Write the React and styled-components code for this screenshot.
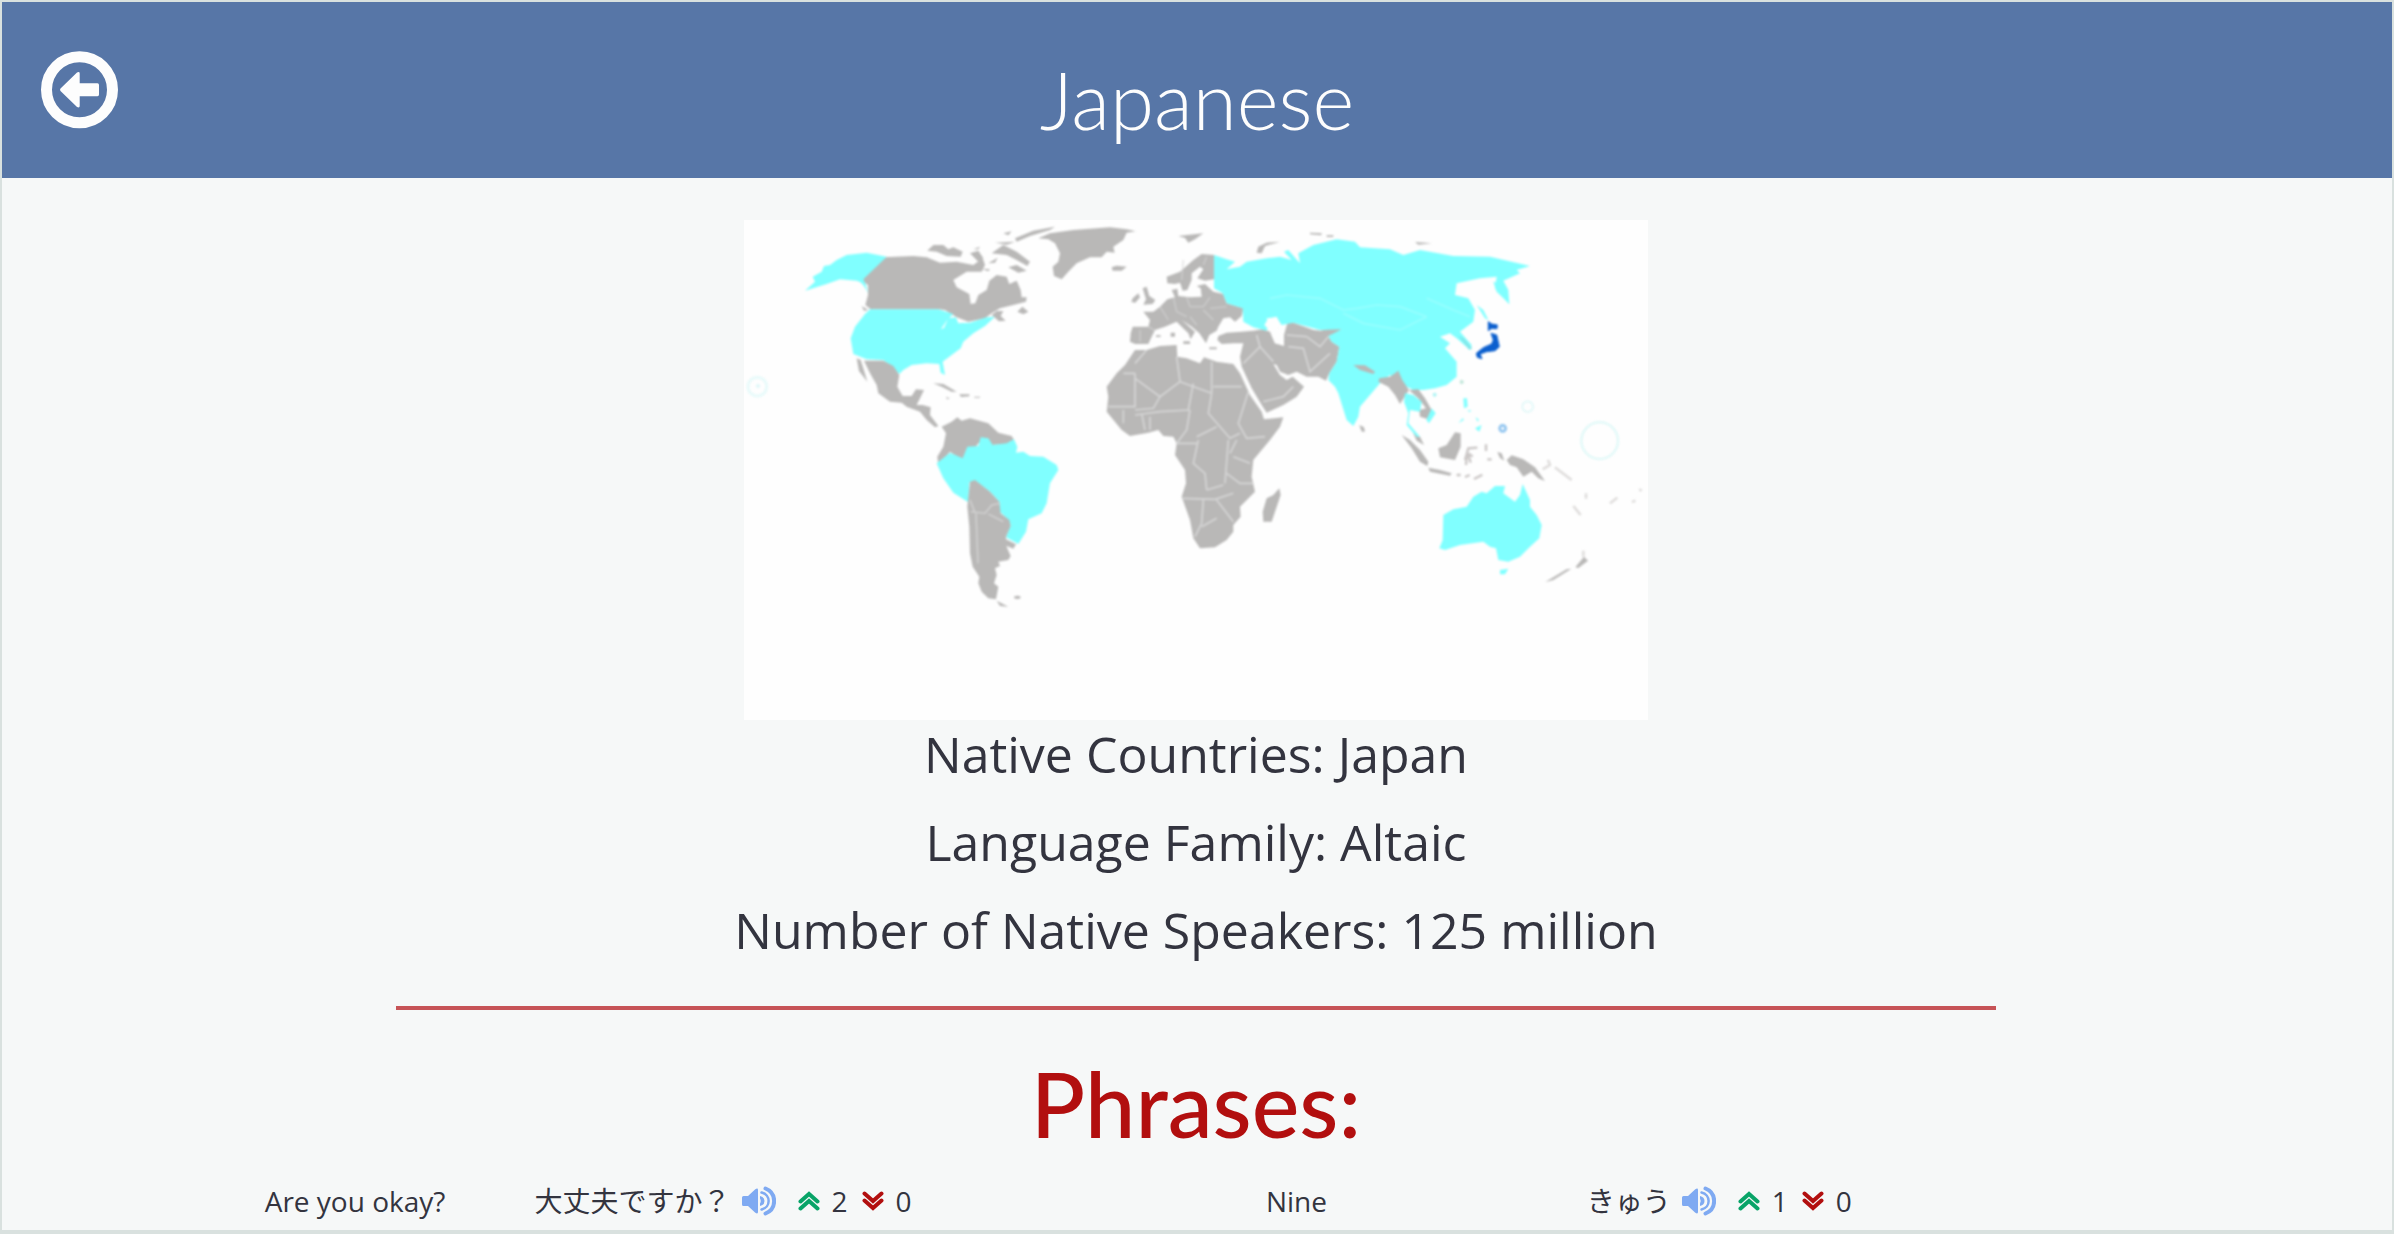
import React from "react";
import styled, { createGlobalStyle } from "styled-components";

const GlobalStyle = createGlobalStyle`
  * { box-sizing: border-box; }
  body { margin: 0; background: #f6f8f8; }
`;

const Page = styled.div`
  height: 100vh;
  overflow: hidden;
  border: solid #d9e1df;
  border-width: 2px 2px 4px;
  background: #f6f8f8;
  color: #33343f;
  font-family: "Open Sans", "Noto Sans CJK JP", sans-serif;
`;

const Header = styled.header`
  display: grid;
  grid-template-columns: 1fr auto 1fr;
  align-items: start;
  height: 176px;
  padding: 49px 39px 0;
  background: #5776a7;
  color: #fdfdfd;
`;

const BackLink = styled.a`
  justify-self: start;
  display: flex;
  color: inherit;
`;

const Title = styled.h1`
  margin: 0;
  font: 300 80px/96px Lato, sans-serif;
`;

const Main = styled.main`
  display: flex;
  flex-direction: column;
  align-items: center;
  padding: 42px 2px 0 0;
`;

const MapFrame = styled.figure`
  margin: 0;
  width: 904px;
  max-width: 100%;
  overflow: hidden;
  background: #fefefe;

  svg {
    display: block;
    width: 100%;
    height: auto;
    filter: blur(1px);
  }
`;

const Facts = styled.div`
  padding-bottom: 28px;
  text-align: center;
`;

const Fact = styled.p`
  margin: 0;
  padding: 0 0 20px;
  font-size: 50px;
  line-height: 68px;
`;

const Divider = styled.hr`
  width: 67%;
  height: 4px;
  margin: -6px 0 0;
  border: 0;
  background: #c65357;
`;

const PhrasesTitle = styled.h2`
  margin: 0;
  padding: 39px 0 24px;
  color: #b20f0f;
  font: 500 90px/108px Lato, sans-serif;
`;

const PhraseGrid = styled.div`
  display: grid;
  grid-template-columns: 270fr 732fr 321fr 541fr;
  align-items: center;
  width: 78%;
  font-size: 28px;
  line-height: 40px;
`;

const Translation = styled.div`
  display: flex;
  align-items: center;
`;

const Native = styled.span`
  margin-right: 11px;
`;

const IconButton = styled.button`
  display: flex;
  padding: 0;
  border: 0;
  background: none;
  color: ${(p) => p.$color};
  cursor: pointer;
`;

const Votes = styled.div`
  display: flex;
  align-items: center;
  gap: 12px;
  margin-left: ${(p) => p.$space}px;
`;

const BackIcon = () => (
  <svg width="78" height="78" viewBox="0 0 78 78" aria-hidden="true">
    <circle cx="38.5" cy="38.7" r="33" fill="none" stroke="currentColor" strokeWidth="11" />
    <path
      d="M19.5 40Q18.5 38.7 19.5 37.4L36 21.5Q38.7 20.3 38.7 22.5V32.2H56.5Q58 32.2 58 34V43.5Q58 45.2 56.5 45.2H38.7V55Q38.7 57.3 36 56Z"
      fill="currentColor"
    />
  </svg>
);

const SpeakerIcon = () => (
  <svg width="34" height="30" viewBox="0 0 34 30" aria-hidden="true">
    <path d="M1.5 10H6L13 3.5Q16 1.5 16 4V26Q16 28.5 13 26.5L6 20H1.5Q0 20 0 18.5V11.5Q0 10 1.5 10Z" fill="currentColor" />
    <path d="M18 10Q22.5 11 22.5 15T18 20V17.5Q19.5 15 18 12.5Z" fill="currentColor" />
    <g fill="none" stroke="currentColor" strokeLinecap="round">
      <path d="M19.5 6.5C29 8.5 29 21.5 19.5 23.5" strokeWidth="2.5" />
      <path d="M23.5 2.5C35 7 35 23 23.5 27.5" strokeWidth="4" />
    </g>
  </svg>
);

const ChevronsIcon = ({ down }) => (
  <svg width="22" height="22" viewBox="0 0 22 22" aria-hidden="true">
    <path
      d={down ? "M2.5 3.5L11 11L19.5 3.5M2.5 10.5L11 18L19.5 10.5" : "M2.5 11.5L11 4L19.5 11.5M2.5 18.5L11 11L19.5 18.5"}
      fill="none"
      stroke="currentColor"
      strokeWidth="4"
      strokeLinecap="round"
    />
  </svg>
);

const LAND = "#b9b8b7";
const SPOKEN = "#80ffff";

// Each region group keeps its own origin and is drawn at three times the map scale.
const regionAt = (x, y) => `translate(${x} ${y}) scale(0.33333)`;

const WorldMap = () => (
  <svg viewBox="0 0 904 500" role="img" aria-label="World map">
    <g transform={regionAt(-4, -10)} fill={LAND} strokeLinejoin="round">
      <path d="M432 142L520 138 560 142 600 158 650 155 700 165 728 145 735 165 725 185 680 185 640 210 650 232 688 252 692 282 706 280 715 255 740 240 748 212 770 195 800 200 808 222 830 212 842 240 845 262 860 262 858 275 820 285 780 295 755 310 735 325 685 335 650 322 615 300 598 298H392L376 285 384 255 384 225 362 210Z" />
      <path d="M562 122L580 105 610 105 625 118 640 112 668 125 662 140 620 138 590 125ZM755 130L790 105 830 125 870 155 862 168 830 150 800 135ZM690 130L715 122 730 145 715 155ZM805 172L830 165 860 182 835 188ZM745 160L773 143 765 158ZM790 70L815 64 805 76ZM825 85L880 62 945 50 930 60 870 78 830 95ZM765 98L825 95 800 104ZM700 118L720 110 715 118ZM725 176L750 178 745 184Z" />
      <path d="M895 85L930 70 1000 60 1110 52 1160 58 1187 64 1160 68 1150 90 1120 110 1124 128 1100 125 1085 142 1050 142 1010 160 985 185 965 208 942 198 938 170 955 155 960 130 945 100 925 88ZM1115 172L1130 167 1160 170 1145 182 1118 182Z" />
      <path d="M832 305L847 290 865 305 850 313ZM755 315L770 303 790 303 782 318 797 332 777 334ZM365 288L385 300 372 302ZM645 345L670 338 655 352Z" />
      <path d="M440 140L370 208 378 225 384 250Q370 215 350 212L300 208 260 222 195 242 225 215 218 200 245 185 252 168 270 165 290 150 320 135 380 128Z" fill={SPOKEN} />
      <path d="M390 298H595L640 312 622 330 603 357 612 354 625 325 648 322 655 340 690 338 740 322 765 320 735 348 700 370 670 395 662 415 635 435 608 455 615 495 602 488 598 462 560 460 515 465 490 480 478 492 455 470 430 450 380 448 340 432 332 385 345 350 375 312Z" fill={SPOKEN} />
      <path d="M372 452L430 452 460 468 478 495 472 530 488 558 515 558 528 538 552 540 540 565 530 585 548 585 572 592 570 615 595 648 585 652 560 630 540 605 500 590 485 578 450 575 415 550 410 525 390 490ZM350 445L362 450 370 475 382 515 357 483ZM580 520L610 522 650 545 635 545 605 530ZM658 553L688 553 688 559 663 561ZM617 562L630 564 622 568ZM703 560H720V563H703Z" />
      <path d="M605 650L635 635 652 622 665 632 690 625 745 640 775 668 815 678 822 690 800 702 755 705 740 685 715 700 705 715 680 735 665 750 630 725 595 765 592 740 610 710 618 670Z" />
      <circle cx="52" cy="530" r="28" fill="none" stroke="#e6fafa" strokeWidth="8" />
      <circle cx="54" cy="528" r="6" fill="#def8f9" />
    </g>

    <g transform={regionAt(-4, 220)} fill={LAND}>
      <path d="M590 70L630 38 668 55 682 20 715 18 722 -8 745 -5 758 15 800 10 822 -2 832 20 828 38 850 35 870 48 910 50 950 75 955 90 930 130 920 190 905 220 865 238 858 275 835 312 798 292 812 255 800 235 780 215 778 185 750 155 705 122 688 128 685 187 640 158 610 115Z" fill={SPOKEN} />
      <path d="M690 125L705 120 750 155 778 185 782 220 808 240 812 258 798 290 800 320 812 348 805 360 775 365 780 378 765 385 770 405 762 430 775 440 768 478 745 475 725 455 715 430 718 410 698 380 690 340 688 260 682 200ZM798 298L828 313 820 326 800 318ZM770 482L805 500 780 498Z" />
      <ellipse cx="832" cy="472" rx="10" ry="5" />
      <path d="M692 215L735 220 755 195 778 190M745 222L790 245M708 220L714 370M690 180L704 215" fill="none" stroke="#d5d5d5" strokeWidth="4" />
    </g>

    <g transform={regionAt(336, -10)} fill={LAND}>
      <path d="M402 135L365 132 340 150 300 185 260 200 262 220 285 222 300 218 308 242 322 240 335 210 335 190 360 170 370 178 352 205 375 212 402 208 412 180Z" />
      <path d="M158 350L205 350 210 330 190 305 220 305 240 290 262 268 285 262 275 240 292 236 295 258 330 262 365 260 362 235 350 228 375 222 400 245 430 252 440 280 490 295 485 318 465 335 450 322 430 325 415 350 410 362 388 375 378 400 358 370 335 350 305 330 345 365 332 388 325 370 305 350 290 335 255 350 225 360 215 380 205 402 165 402 150 395 152 370ZM188 235L200 230 208 258 226 270 218 282 190 284 198 268ZM158 265L175 250 180 262 166 278 154 276ZM272 368H285V380H272ZM310 394H330V402H310ZM388 412H410V418H388ZM228 376H242V381H228Z" />
      <path d="M415 378L440 368 485 365 520 362 548 358 570 365 578 385 585 400 612 408 612 375 622 340 640 338 700 360 722 362 750 355 785 358 770 375 745 378 755 395 778 410 770 455 748 490 738 512 715 500 680 500 650 485 625 495 600 485 590 465 580 462 600 495 620 510 638 500 672 530 650 560 610 585 560 608 545 585 515 535 485 470 480 440 490 400 460 400 425 402 412 390Z" />
      <path d="M165 420L200 420 240 408 290 405 292 440 320 445 360 460 372 442 410 455 460 462 480 490 510 555 545 605 552 628 610 622 600 650 570 690 520 750 515 800 525 845 480 890 482 920 460 945 460 965 440 990 405 1012 360 1015 340 985 330 930 305 860 318 820 315 780 285 735 290 700 280 680 250 678 235 660 205 668 150 678 125 660 80 605 85 560 80 530 110 490 135 465ZM598 835L602 855 575 935 550 935 548 905 560 865 580 855ZM295 78L370 70 345 88 325 98 315 84ZM530 128L535 110 560 98 600 95 555 108 545 130ZM690 68L725 70 724 76 690 73ZM740 76H760V81H740ZM838 645L852 652 853 663 845 664Z" />
      <path d="M402 135L440 148 465 155 440 178 480 170 500 155 560 145 600 140 635 150 612 125 625 120 660 160 655 130 700 105 770 88 825 95 840 112 930 118 970 135 1020 120 1120 138 1230 140 1350 168 1310 180 1320 190 1270 212 1285 240 1288 283 1245 235 1250 200 1200 205 1130 220 1125 255 1165 265 1185 300 1180 335 1140 365 1175 405 1170 420 1130 385 1110 370 1080 380 1110 400 1095 415 1130 455 1130 500 1100 525 1065 535 1030 540 1000 540 960 520 930 495 900 520 870 555 840 590 835 620 820 648 800 630 775 550 765 530 745 510 748 490 770 455 778 410 755 395 745 378 785 358 720 360 640 338 605 345 590 325 560 325 565 350 560 362 520 352 490 335 488 295 440 280 428 250 402 235Z" fill={SPOKEN} />
      <path d="M565 325L590 320 600 340 590 355 612 380 610 405 585 400 572 365 553 345Z" fill="#fefefe" />
      <g fill="none" stroke="#d6d6d6" strokeWidth="5">
        <path d="M165 490V590H85M130 490H165M165 505L240 560 300 515 290 440M200 420L165 460M300 515L395 550M395 455V550M400 530H485M395 550L385 610 450 685 480 670M340 520L325 600 240 605M240 605L165 615M185 610L195 660M130 600V640M210 620V660M240 560L220 595 165 600M330 600L320 660 290 700M350 680L410 650M355 690L340 760 375 790 380 840M305 865L405 868 460 850M445 690L435 820M460 740L510 760M440 790L480 820H520M380 840L430 825M370 870L365 940 345 980M410 870L460 935M365 950L410 925M505 545L475 640 500 685 555 680M290 700H350M470 690L450 730" />
        <path d="M490 460L540 410 580 455M540 410L530 375M625 410L670 415 690 485 750 430M680 380L720 410 745 380M550 575L610 560 640 530M620 375L680 380" />
        <path d="M240 290L265 330M280 262L290 305 320 320M320 262L330 290 370 290 390 262M330 320L350 345M370 300L400 330M390 295L440 290M205 350L225 362M180 360V395M310 150L305 210M380 140L370 165" strokeWidth="4" opacity=".7" />
      </g>
      <path d="M570 265L620 255 720 265 790 300 830 295 890 285 960 290 1040 320M790 310L850 340 960 360 1040 320M1040 265L1120 300 1170 320" fill="none" stroke="#98ffff" strokeWidth="5" />
    </g>

    <g transform={regionAt(596, -10)} fill={LAND}>
      <path d="M150 500L175 482 187 510 207 540 180 582 165 555 145 530 115 515 118 505ZM40 465L75 466 105 485 100 492 60 480ZM207 540L235 538 255 565 275 600 265 628 240 620 238 600 258 595 235 565ZM218 665L240 680 252 705 230 692ZM225 96L275 100 235 104Z" />
      <path d="M195 550L220 555 245 575 240 605 210 600 205 640 240 680 230 680 200 645 205 610 192 575ZM275 595L287 610 267 640 259 630ZM410 285L430 300 445 330 435 325ZM370 565L381 565 383 590 372 595ZM405 655L425 645 418 665ZM355 640L368 625 372 629ZM382 600L395 602 388 606ZM406 622L416 628 414 636ZM460 215L490 225 508 282 470 245Z" fill={SPOKEN} />
      <path d="M355 378L372 385 397 415 388 420Z" fill="#83e8ea" />
      <circle cx="365" cy="516" r="6" fill="#bfe5d8" />
      <circle cx="284" cy="554" r="6" fill="#aef4f4" />
      <path d="M445 335L455 342 472 345 471 356 455 355 445 362ZM453 370L470 375 478 410 465 422 440 425 420 432 426 446 412 442 409 430 430 413 455 402 460 390Z" fill="#0b5fce" stroke="#0b5fce" strokeWidth="3" />
      <g fill="none">
        <circle cx="488" cy="655" r="9" stroke="#90c4ef" strokeWidth="8" />
        <circle cx="563" cy="590" r="16" stroke="#dff8f8" strokeWidth="5" />
        <circle cx="779" cy="692" r="55" stroke="#dcf8f7" strokeWidth="6" />
      </g>
    </g>

    <g transform={regionAt(596, 160)} fill={LAND}>
      <path d="M185 165L210 180 240 210 265 245 262 258 240 245 215 205ZM265 263L300 270 335 280 330 287 270 275ZM295 205L320 195 345 157 362 160 362 200 345 240 300 232ZM500 240L515 226 550 238 585 262 615 303 595 295 575 275 550 290 530 262 510 255ZM472 216L485 220 493 242 480 234ZM616 606L680 568 694 566 640 600ZM706 562L732 530 744 542 715 564ZM60 140L72 145 75 154 67 156Z" />
      <path d="M375 240L385 205 412 203M385 220L398 230M380 230L378 255M385 225L392 248M438 193V213M350 285H362M375 291L389 285M402 297L427 284M442 238H455" fill="none" stroke="#c9c5c4" strokeWidth="7" />
      <path d="M645 262L695 300M608 268L630 255 624 240M738 340V356M700 378L722 405M810 370L832 353M876 366L886 362M898 328L905 332M730 512V530" fill="none" stroke="#dcdad9" strokeWidth="7" />
      <path d="M310 405L340 388 380 380 400 350 425 335 440 340 465 318 495 318 490 340 525 365 540 345 548 312 570 360 570 380 590 405 605 435 598 475 570 500 540 530 505 545 475 540 468 505 450 500 430 485 360 495 315 510 298 505 308 480ZM480 570L505 566 495 583 480 583Z" fill={SPOKEN} />
    </g>
  </svg>
);

const phrases = [
  { english: "Are you okay?", native: "大丈夫ですか？", up: 2, down: 0 },
  { english: "Nine", native: "きゅう", up: 1, down: 0 },
];

const Phrase = ({ english, native, up, down }) => (
  <>
    <span>{english}</span>
    <Translation>
      <Native lang="ja">{native}</Native>
      <IconButton type="button" $color="#7faaf2" aria-label="Listen">
        <SpeakerIcon />
      </IconButton>
      <Votes $space={22}>
        <IconButton type="button" $color="#08a468" aria-label="Vote up">
          <ChevronsIcon />
        </IconButton>
        <span>{up}</span>
      </Votes>
      <Votes $space={14}>
        <IconButton type="button" $color="#b20f0f" aria-label="Vote down">
          <ChevronsIcon down />
        </IconButton>
        <span>{down}</span>
      </Votes>
    </Translation>
  </>
);

export default function App() {
  return (
    <Page>
      <GlobalStyle />
      <Header>
        <BackLink href="#" aria-label="Back">
          <BackIcon />
        </BackLink>
        <Title>Japanese</Title>
      </Header>
      <Main>
        <MapFrame>
          <WorldMap />
        </MapFrame>
        <Facts>
          <Fact>Native Countries: Japan</Fact>
          <Fact>Language Family: Altaic</Fact>
          <Fact>Number of Native Speakers: 125 million</Fact>
        </Facts>
        <Divider />
        <PhrasesTitle>Phrases:</PhrasesTitle>
        <PhraseGrid>
          {phrases.map((phrase) => (
            <Phrase key={phrase.english} {...phrase} />
          ))}
        </PhraseGrid>
      </Main>
    </Page>
  );
}
